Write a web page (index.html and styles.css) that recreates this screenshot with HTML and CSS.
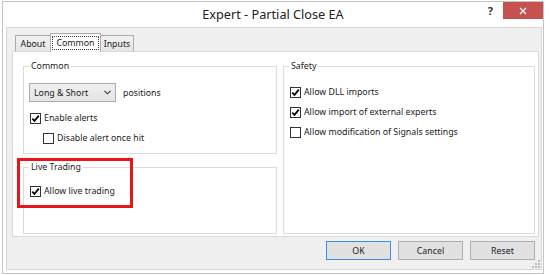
FILE: index.html
```html
<!DOCTYPE html>
<html lang="en">
<head>
  <meta charset="utf-8" />
  <title>Expert - Partial Close EA</title>
  <link rel="stylesheet" href="styles.css">
</head>
<body>
  <div class="window">
    <div class="titlebar">
      <span></span>
      <span class="title">Expert - Partial Close EA</span>
      <div class="caption-buttons">
        <span class="help">?</span>
        <span class="close">
          <svg width="8" height="8" viewBox="0 0 8 8"><path d="M1 1L7 7M7 1L1 7" stroke="#fff" stroke-width="1.3" fill="none"/></svg>
        </span>
      </div>
    </div>

    <div class="client">
      <div class="tabs">
        <div class="tab first">About</div>
        <div class="tab active"><span class="focus">Common</span></div>
        <div class="tab last">Inputs</div>
      </div>

      <div class="panel">
        <div class="col">
          <fieldset class="group common">
            <legend>Common</legend>
            <div class="row">
              <div class="combo">
                <span>Long &amp; Short</span>
                <svg width="7" height="5" viewBox="0 0 7 5"><path d="M0.5 0.8L3.5 3.8L6.5 0.8" stroke="#333" stroke-width="1.1" fill="none"/></svg>
              </div>
              <span class="after">positions</span>
            </div>
            <label class="opt">
              <span class="box"><svg width="9" height="9" viewBox="0 0 9 9"><path d="M1.3 4.6L3.5 6.9L7.8 1.6" stroke="#000" stroke-width="1.7" fill="none"/></svg></span>
              Enable alerts
            </label>
            <label class="opt indent">
              <span class="box"></span>
              Disable alert once hit
            </label>
          </fieldset>

          <fieldset class="group live">
            <legend>Live Trading</legend>
            <label class="opt">
              <span class="box"><svg width="9" height="9" viewBox="0 0 9 9"><path d="M1.3 4.6L3.5 6.9L7.8 1.6" stroke="#000" stroke-width="1.7" fill="none"/></svg></span>
              Allow live trading
            </label>
          </fieldset>
        </div>

        <div class="col">
          <fieldset class="group safety">
            <legend>Safety</legend>
            <label class="opt">
              <span class="box"><svg width="9" height="9" viewBox="0 0 9 9"><path d="M1.3 4.6L3.5 6.9L7.8 1.6" stroke="#000" stroke-width="1.7" fill="none"/></svg></span>
              Allow DLL imports
            </label>
            <label class="opt">
              <span class="box"><svg width="9" height="9" viewBox="0 0 9 9"><path d="M1.3 4.6L3.5 6.9L7.8 1.6" stroke="#000" stroke-width="1.7" fill="none"/></svg></span>
              Allow import of external experts
            </label>
            <label class="opt">
              <span class="box"></span>
              Allow modification of Signals settings
            </label>
          </fieldset>
        </div>
      </div>

      <div class="buttons">
        <button class="default">OK</button>
        <button>Cancel</button>
        <button>Reset</button>
      </div>

      <span class="grip">
        <svg width="8" height="8" viewBox="0 0 8 8" fill="#bcbcbc">
          <rect x="6" y="0" width="2" height="2"/>
          <rect x="3" y="3" width="2" height="2"/>
          <rect x="6" y="3" width="2" height="2"/>
          <rect x="0" y="6" width="2" height="2"/>
          <rect x="3" y="6" width="2" height="2"/>
          <rect x="6" y="6" width="2" height="2"/>
        </svg>
      </span>
    </div>

    <div class="highlight"></div>
  </div>
</body>
</html>
```

FILE: styles.css
```css
* {
  box-sizing: border-box;
}

body {
  margin: 0;
  background: #fff;
  font-family: 'Noto Sans', 'Open Sans', sans-serif;
  font-size: 8.8px;
  color: #1a1a1a;
}

.window {
  position: relative;
  margin: 1px 0 0 2px;
  width: 542px;
  height: 273px;
  border: 1px solid #c4c4c4;
  background: #fff;
}

/* title bar */

.titlebar {
  height: 25px;
  display: grid;
  grid-template-columns: 1fr auto 1fr;
  align-items: start;
}

.title {
  padding-top: 3px;
  font-size: 12.7px;
  line-height: 18px;
  color: #222;
}

.caption-buttons {
  justify-self: end;
  display: flex;
  align-items: flex-start;
}

.help {
  margin: 3px 10px 0 0;
  font-size: 11px;
  font-weight: bold;
  line-height: 12px;
  color: #333;
}

.close {
  width: 40px;
  height: 17px;
  background: #c75050;
  display: flex;
  align-items: center;
  justify-content: center;
}

/* client area */

.client {
  position: relative;
  margin: 0 1px 0 3px;
  height: 243px;
  border: 1px solid #d6d6d6;
  background: #f0f0f0;
}

.tabs {
  height: 23px;
  padding-left: 8px;
  display: flex;
  align-items: flex-end;
}

.tab {
  height: 16px;
  border: 1px solid #acacac;
  border-bottom: none;
  background: linear-gradient(#f2f2f2, #e6e6e6);
  display: flex;
  align-items: center;
  justify-content: center;
  line-height: 12px;
}

.tab.first {
  width: 35px;
  border-right: none;
}

.tab.last {
  width: 33px;
  border-left: none;
}

.tab.active {
  position: relative;
  width: 51px;
  height: 19px;
  margin-bottom: -1px;
  padding-top: 2px;
  align-items: flex-start;
  background: #fff;
}

.focus {
  padding: 0 3px;
  border: 1px dotted #444;
  line-height: 12px;
}

.panel {
  margin: 0 2px 0 5px;
  height: 186px;
  border: 1px solid #d9d9d9;
  background: #fff;
  padding: 8px 3px 2px 10px;
  display: grid;
  grid-template-columns: 254px 1fr;
  column-gap: 6px;
}

.col {
  display: flex;
  flex-direction: column;
}

/* group boxes */

.group {
  margin: 0;
  min-width: 0;
  border: 1px solid #dcdcdc;
  padding: 0 5px;
}

.group legend {
  padding: 0 2px;
  line-height: 12px;
}

.group.common {
  padding-top: 11px;
  padding-bottom: 5px;
}

.group.live {
  flex: 1;
  margin-top: 7px;
  padding-top: 8px;
}

.group.safety {
  flex: 1;
  padding-top: 10px;
}

.row {
  display: flex;
  align-items: center;
  margin-bottom: 6px;
}

.combo {
  width: 87px;
  height: 19px;
  border: 1px solid #acacac;
  background: linear-gradient(#efefef, #e5e5e5);
  padding: 0 4px 0 4px;
  display: flex;
  align-items: center;
  justify-content: space-between;
}

.after {
  margin-left: 7px;
}

.opt {
  height: 20px;
  padding-left: 1px;
  display: flex;
  align-items: center;
}

.opt.indent {
  padding-left: 14px;
}

.box {
  width: 11px;
  height: 11px;
  margin-right: 3px;
  border: 1px solid #333;
  background: #fff;
  display: inline-flex;
  align-items: center;
  justify-content: center;
}

/* buttons */

.buttons {
  margin-top: 4px;
  padding-right: 6px;
  display: flex;
  justify-content: flex-end;
  gap: 7px;
}

.buttons button {
  width: 65px;
  height: 19px;
  padding: 0;
  border: 1px solid #adadad;
  background: #e1e1e1;
  font-family: inherit;
  font-size: 8.8px;
  color: #1a1a1a;
}

.buttons button.default {
  border-color: #3c8fe0;
}

.grip {
  position: absolute;
  right: 1px;
  bottom: 1px;
  display: flex;
}

/* annotation */

.highlight {
  position: absolute;
  left: 14px;
  top: 156px;
  width: 116px;
  height: 50px;
  border: 3px solid #e8161b;
}
```
